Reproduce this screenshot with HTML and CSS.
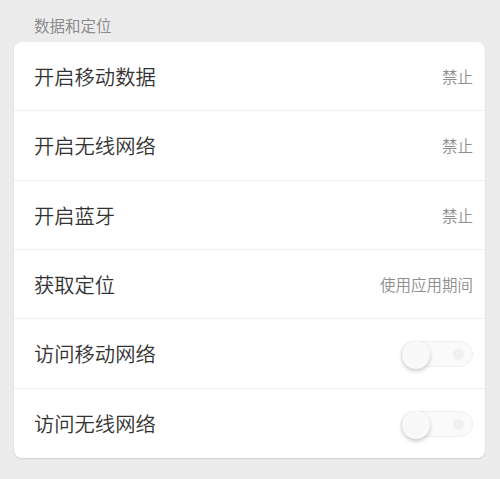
FILE: index.html
```html
<!DOCTYPE html>
<html lang="zh-CN">
<head>
<meta charset="utf-8">
<link rel="stylesheet" href="styles.css">
</head>
<body>
<div class="page">
  <div class="section-title">数据和定位</div>
  <div class="card">
    <div class="row"><span class="label">开启移动数据</span><span class="value">禁止</span></div>
    <div class="row"><span class="label">开启无线网络</span><span class="value">禁止</span></div>
    <div class="row"><span class="label">开启蓝牙</span><span class="value">禁止</span></div>
    <div class="row"><span class="label">获取定位</span><span class="value">使用应用期间</span></div>
    <div class="row"><span class="label">访问移动网络</span><span class="toggle"><span class="dot"></span><span class="knob"></span></span></div>
    <div class="row"><span class="label">访问无线网络</span><span class="toggle"><span class="dot"></span><span class="knob"></span></span></div>
  </div>
</div>
</body>
</html>
```

FILE: styles.css
```css
html, body {
  margin: 0;
  padding: 0;
  background: #ececec;
  font-family: "Noto Sans CJK SC", "Noto Sans", sans-serif;
}
.page {
  width: 500px;
  height: 479px;
  padding: 0 15px 0 14px;
  box-sizing: border-box;
}
.section-title {
  height: 42px;
  line-height: 20px;
  padding-top: 15px;
  box-sizing: border-box;
  padding-left: 20px;
  font-size: 15.5px;
  color: #8c8c8c;
}
.card {
  background: #fff;
  border-radius: 8px;
  height: 416px;
  display: grid;
  grid-template-rows: repeat(6, 1fr);
  box-shadow: 0 1px 2px rgba(0,0,0,0.12);
}
.row {
  display: flex;
  align-items: center;
  justify-content: space-between;
  padding: 0 12px 0 20px;
  border-bottom: 1px solid #f0f0f0;
}
.row:last-child {
  border-bottom: none;
}
.label {
  font-size: 20.3px;
  color: #333;
  font-weight: 350;
}
.value {
  font-size: 15.5px;
  color: #8e8e8e;
  font-weight: 350;
}
.toggle {
  position: relative;
  width: 72px;
  height: 26px;
  border-radius: 13px;
  background: #fafafa;
  border: 1px solid #efefef;
  box-sizing: border-box;
  margin-top: 1px;
}
.knob {
  position: absolute;
  left: 0;
  top: -1px;
  width: 28px;
  height: 28px;
  border-radius: 50%;
  background: #f9f9f9;
  box-shadow: 0 2px 4px rgba(0,0,0,0.22);
}
.dot {
  position: absolute;
  right: 8px;
  top: 7px;
  width: 11px;
  height: 11px;
  border-radius: 50%;
  background: #f0f0f0;
}
```
